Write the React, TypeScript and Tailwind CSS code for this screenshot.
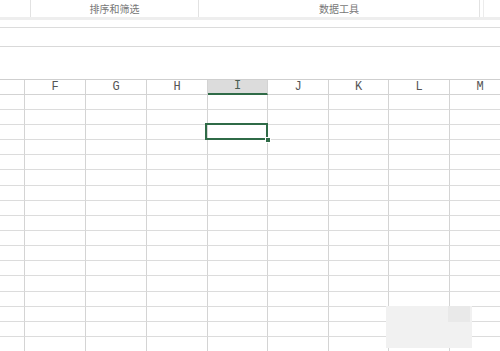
import React from 'react';

const columns = [
  { label: '', width: 25 },
  { label: 'F', width: 61 },
  { label: 'G', width: 61 },
  { label: 'H', width: 61 },
  { label: 'I', width: 60, active: true },
  { label: 'J', width: 61 },
  { label: 'K', width: 60 },
  { label: 'L', width: 61 },
  { label: 'M', width: 61 },
];

const rowHeights = [15, 15, 15, 15, 15, 16, 15, 15, 15, 15, 15, 15, 16, 15, 15, 15, 15];

function RibbonLabels() {
  return (
    <div className="flex h-[17px] text-[10px] leading-[17px] text-[#777]" style={{ fontFamily: '"Noto Sans CJK SC", sans-serif' }}>
      <div className="w-[31px] shrink-0 border-r border-[#e2e2e2]" />
      <div className="w-[168px] shrink-0 border-r border-[#e2e2e2] text-center">排序和筛选</div>
      <div className="w-[281px] shrink-0 border-r border-[#e2e2e2] text-center">数据工具</div>
      <div className="w-[4px] shrink-0 border-r border-[#ececec]" />
      <div className="flex-1" />
    </div>
  );
}

export default function App() {
  return (
    <div className="relative w-[500px] h-[351px] overflow-hidden bg-white">
      <RibbonLabels />
      <div className="h-[3px] bg-[#eeeeee]" />
      <div className="h-[8px] border-b border-[#dcdcdc]" />
      <div className="h-[19px] border-b border-[#d9d9d9]" />
      <div className="h-[33px] border-b border-[#cfcfcf]" />

      {/* column headers */}
      <div className="flex h-[15px]" style={{ fontFamily: '"Liberation Mono", monospace' }}>
        {columns.map((c, i) => (
          <div
            key={i}
            style={{ width: c.width }}
            className={
              c.active
                ? 'shrink-0 border-b-2 border-r border-b-[#2f6b47] border-r-[#d3d3d3] bg-[#dcdcdc] text-center text-[12px] leading-[13px] text-[#4a5e52]'
                : 'shrink-0 border-b border-r border-[#d3d3d3] text-center text-[12px] leading-[14px] text-[#555]'
            }
          >
            {c.label}
          </div>
        ))}
      </div>

      {/* grid */}
      {rowHeights.map((h, r) => (
        <div key={r} className="flex" style={{ height: h }}>
          {columns.map((c, i) => (
            <div key={i} style={{ width: c.width }} className="shrink-0 border-b border-r border-b-[#dcdcdc] border-r-[#d4d4d4]" />
          ))}
        </div>
      ))}

      {/* active cell */}
      <div className="absolute left-[205px] top-[123px] w-[63px] h-[17px] border-2 border-[#2f6b47]" />
      <div className="absolute left-[265px] top-[137px] w-[6px] h-[6px] bg-[#2f6b47] border border-white" />

      {/* blurred patch */}
      <div className="absolute left-[386px] top-[306px] w-[86px] h-[42px] bg-[#f1f1f1]" />
      <div className="absolute left-[448px] top-[306px] w-[22px] h-[16px] bg-[#e9e9e9]" />
    </div>
  );
}
